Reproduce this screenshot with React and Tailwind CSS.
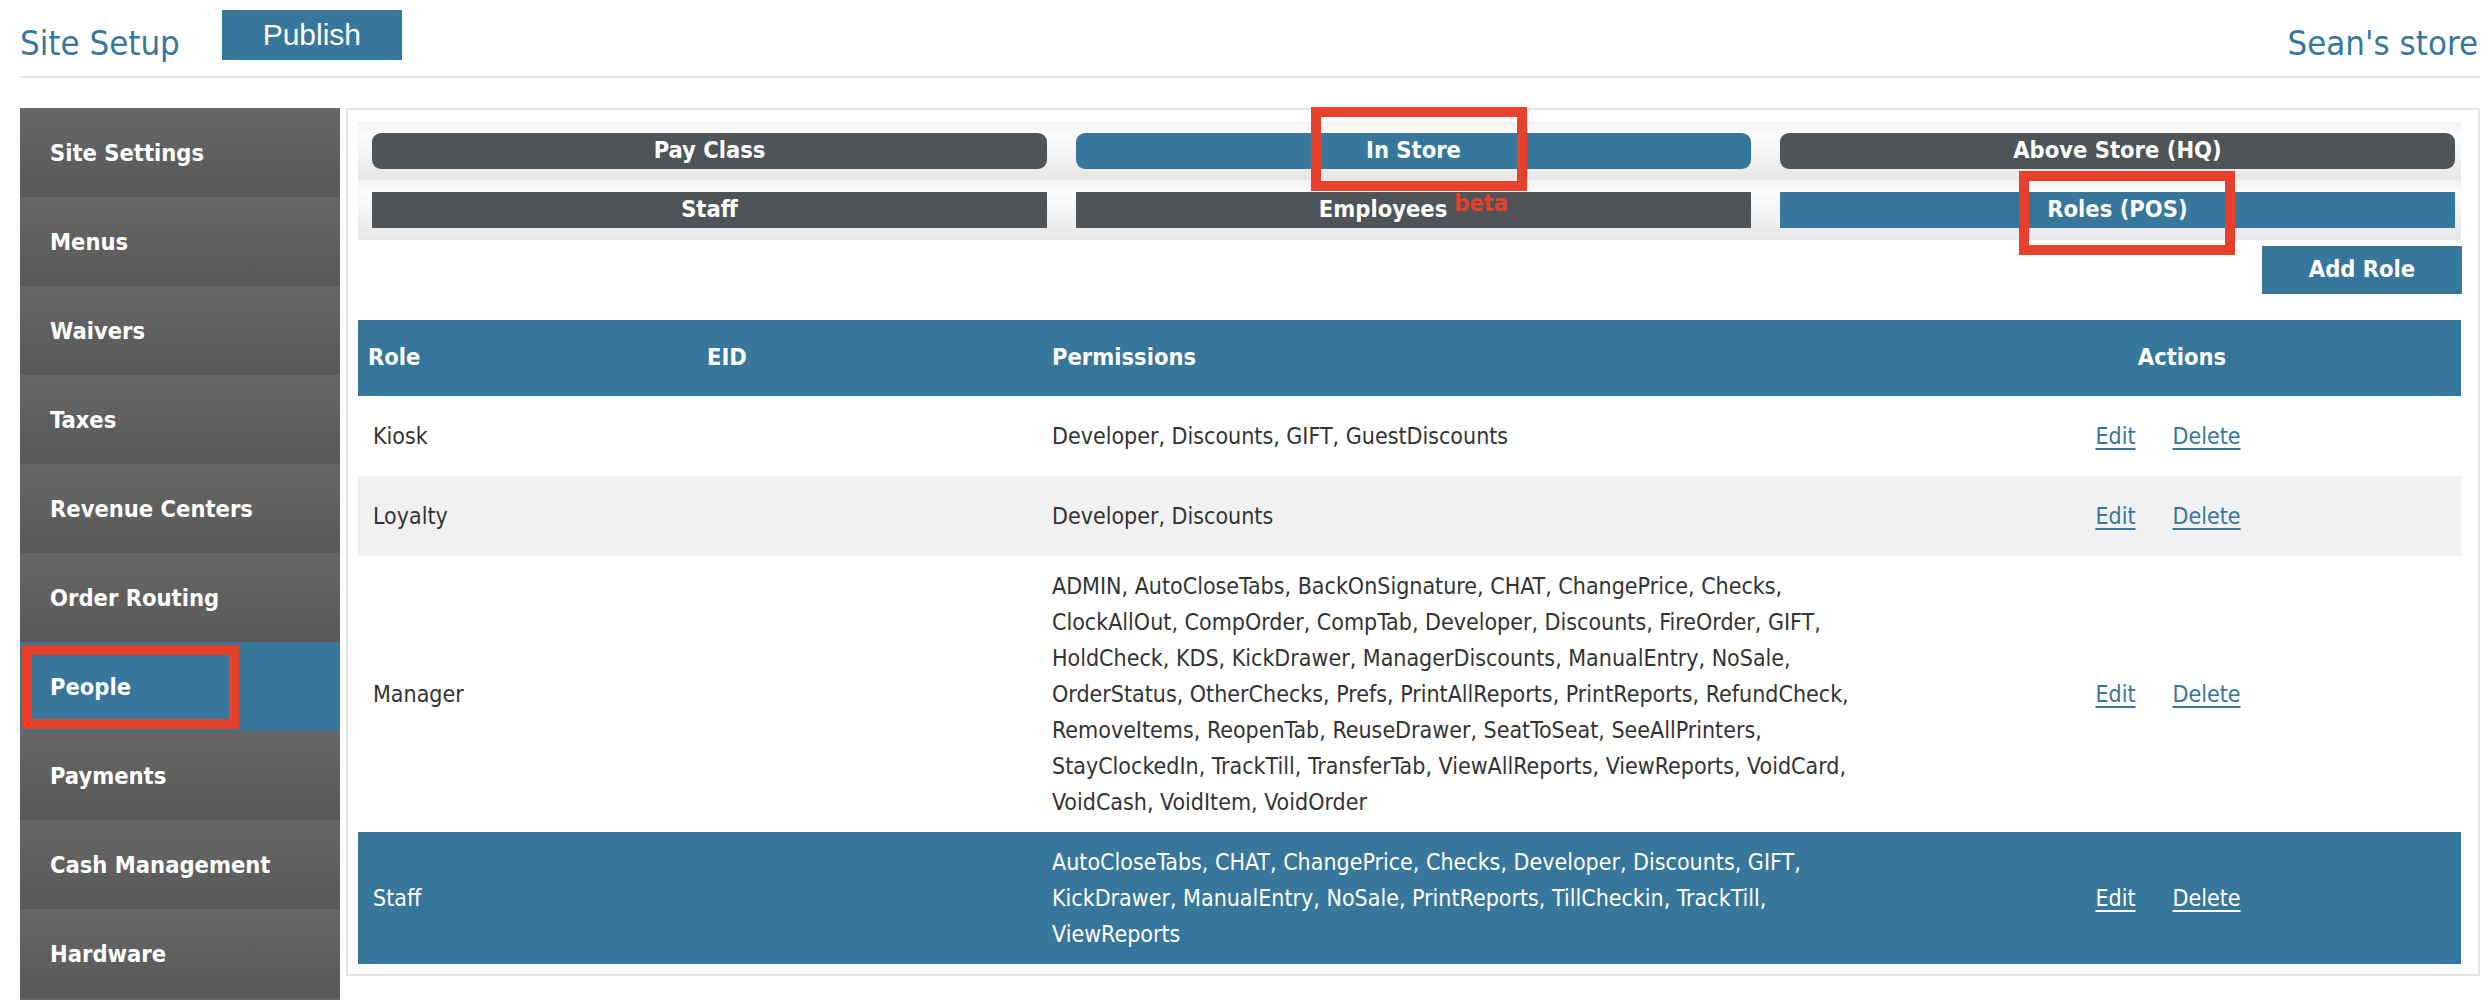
import React from "react";

const navItems = [
  "Site Settings",
  "Menus",
  "Waivers",
  "Taxes",
  "Revenue Centers",
  "Order Routing",
  "People",
  "Payments",
  "Cash Management",
  "Hardware",
  "",
];

const rows = [
  { role: "Kiosk", kind: "white", lines: ["Developer, Discounts, GIFT, GuestDiscounts"] },
  { role: "Loyalty", kind: "gray", lines: ["Developer, Discounts"] },
  {
    role: "Manager",
    kind: "white",
    lines: [
      "ADMIN, AutoCloseTabs, BackOnSignature, CHAT, ChangePrice, Checks,",
      "ClockAllOut, CompOrder, CompTab, Developer, Discounts, FireOrder, GIFT,",
      "HoldCheck, KDS, KickDrawer, ManagerDiscounts, ManualEntry, NoSale,",
      "OrderStatus, OtherChecks, Prefs, PrintAllReports, PrintReports, RefundCheck,",
      "RemoveItems, ReopenTab, ReuseDrawer, SeatToSeat, SeeAllPrinters,",
      "StayClockedIn, TrackTill, TransferTab, ViewAllReports, ViewReports, VoidCard,",
      "VoidCash, VoidItem, VoidOrder",
    ],
  },
  {
    role: "Staff",
    kind: "selected",
    lines: [
      "AutoCloseTabs, CHAT, ChangePrice, Checks, Developer, Discounts, GIFT,",
      "KickDrawer, ManualEntry, NoSale, PrintReports, TillCheckin, TrackTill,",
      "ViewReports",
    ],
  },
];

const rowBg = {
  white: "bg-white text-[#333333]",
  gray: "bg-[#f1f1f1] text-[#333333]",
  selected: "bg-[#37779c] text-white",
};

const linkColor = {
  white: "text-[#37779c] decoration-[#37779c]",
  gray: "text-[#37779c] decoration-[#37779c]",
  selected: "text-white decoration-white",
};

export default function App() {
  return (
    <div className="relative w-[2492px] h-[1000px] overflow-hidden bg-white font-['DejaVu_Sans_Condensed','DejaVu_Sans',sans-serif]">
      {/* Header */}
      <header className="ml-[20px] mr-[12px] h-[78px] border-b-2 border-[#e6e6e6] flex items-start">
        <div className="mt-[23px] text-[34.5px] leading-[40px] text-[#36779d]">Site Setup</div>
        <button className="ml-[42px] mt-[10px] w-[180px] h-[50px] bg-[#37779c] text-white text-[30px] leading-none font-['Liberation_Sans',Arial,sans-serif]">
          Publish
        </button>
        <div className="ml-auto mr-[2px] mt-[23px] text-[34.5px] leading-[40px] text-[#36779d]">Sean's store</div>
      </header>

      <div className="mt-[30px] ml-[20px] mr-[12px] flex items-start gap-[6px]">
        {/* Sidebar */}
        <nav className="w-[320px] shrink-0 flex flex-col">
          {navItems.map((item, i) =>
            item === "People" ? (
              <div key={i} className="h-[89px] flex items-center pl-[30px] pt-[2px] bg-[#37779c] text-white font-bold text-[23.5px] leading-none">
                {item}
              </div>
            ) : (
              <div key={i} className="h-[89px] flex items-center pl-[30px] pt-[2px] bg-linear-to-b from-[#676767] to-[#595959] text-white font-bold text-[23.5px] leading-none">
                {item}
              </div>
            )
          )}
        </nav>

        {/* Main panel */}
        <main className="flex-1 border-2 border-[#e6e6e6] pt-[12px] pl-[10px] pr-[17px] pb-[10px]">
          {/* Tab strip */}
          <div className="h-[58px] bg-linear-to-b from-[#f1f1f1] via-[#fdfdfd] via-20% to-[#e6e6e6] grid grid-cols-3 gap-[29px] pl-[14px] pr-[6px] items-center">
            <div className="h-[36px] rounded-[9px] bg-[#4f5459] text-white font-bold text-[23.5px] leading-none flex items-center justify-center">Pay Class</div>
            <div className="h-[36px] rounded-[9px] bg-[#37779c] text-white font-bold text-[23.5px] leading-none flex items-center justify-center">In Store</div>
            <div className="h-[36px] rounded-[9px] bg-[#4f5459] text-white font-bold text-[23.5px] leading-none flex items-center justify-center">Above Store (HQ)</div>
          </div>
          <div className="h-[60px] bg-linear-to-b from-[#f1f1f1] via-[#fdfdfd] via-20% to-[#e6e6e6] grid grid-cols-3 gap-[29px] pl-[14px] pr-[6px] items-center">
            <div className="h-[36px] bg-[#4f5459] text-white font-bold text-[23.5px] leading-none flex items-center justify-center">Staff</div>
            <div className="h-[36px] bg-[#4f5459] text-white font-bold text-[23.5px] leading-none flex items-center justify-center">
              <span>Employees</span>
              <span className="ml-[7px] relative -top-[6px] text-[#e8412b]">beta</span>
            </div>
            <div className="h-[36px] bg-[#37779c] text-white font-bold text-[23.5px] leading-none flex items-center justify-center">Roles (POS)</div>
          </div>

          {/* Add role */}
          <div className="mt-[6px] flex justify-end">
            <button className="w-[200px] h-[48px] mr-[-1px] bg-[#37779c] text-white font-bold text-[23.5px] leading-none">Add Role</button>
          </div>

          {/* Table */}
          <div className="mt-[26px]">
            <div className="h-[76px] grid grid-cols-[339px_345px_853px_1fr] items-center bg-[#37779c] text-white font-bold text-[23.5px] leading-none">
              <div className="pl-[10px]">Role</div>
              <div className="pl-[10px]">EID</div>
              <div className="pl-[10px]">Permissions</div>
              <div className="text-center pl-[8px]">Actions</div>
            </div>
            {rows.map((r) => (
              <div key={r.role} className={`min-h-[80px] grid grid-cols-[339px_345px_853px_1fr] items-center text-[23px] leading-[36px] ${rowBg[r.kind]}`}>
                <div className="pl-[15px]">{r.role}</div>
                <div className="pl-[10px]"></div>
                <div className="pl-[10px] py-[12px] whitespace-nowrap">
                  {r.lines.map((l, i) => (
                    <div key={i}>{l}</div>
                  ))}
                </div>
                <div className="text-center pr-[20px]">
                  <a className={`underline decoration-2 underline-offset-[4px] ${linkColor[r.kind]}`}>Edit</a>
                  <a className={`ml-[37px] underline decoration-2 underline-offset-[4px] ${linkColor[r.kind]}`}>Delete</a>
                </div>
              </div>
            ))}
          </div>
        </main>
      </div>

      {/* Red annotation boxes */}
      <div className="absolute left-[1311px] top-[107px] w-[216px] h-[84px] border-[10px] border-[#e8412b]"></div>
      <div className="absolute left-[2019px] top-[171px] w-[216px] h-[84px] border-[10px] border-[#e8412b]"></div>
      <div className="absolute left-[22px] top-[645px] w-[217px] h-[84px] border-[10px] border-[#e8412b]"></div>
    </div>
  );
}
